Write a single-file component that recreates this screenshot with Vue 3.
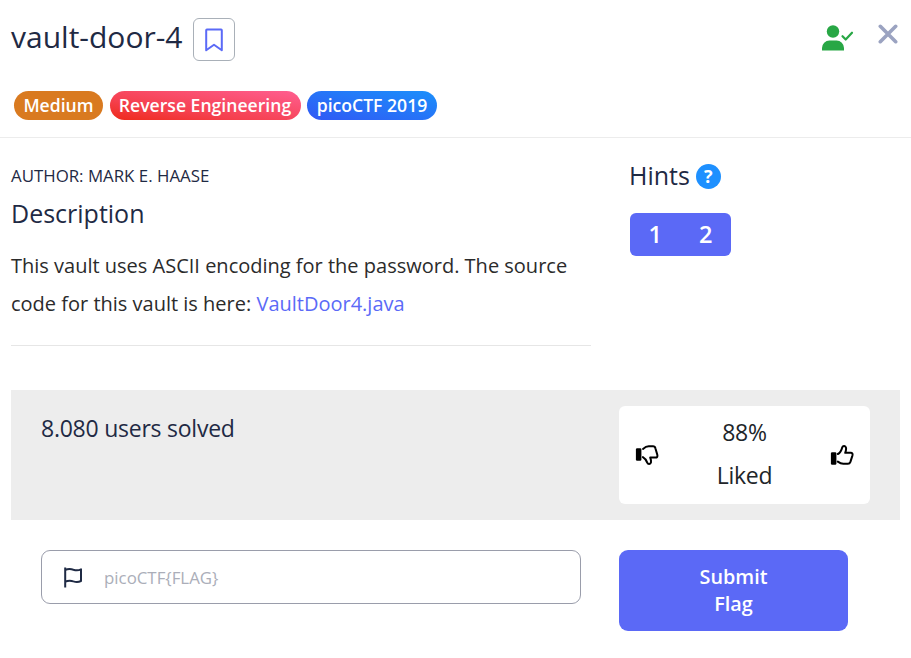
<script setup>
const tags = [
  { label: 'Medium', kind: 'medium' },
  { label: 'Reverse Engineering', kind: 'category' },
  { label: 'picoCTF 2019', kind: 'event' },
]
const hints = [1, 2]
</script>

<template>
  <main class="dialog">
    <header class="header">
      <div class="title-row">
        <h1 class="title">vault-door-4</h1>
        <button class="bookmark" aria-label="Bookmark">
          <svg width="18" height="24" viewBox="0 0 18 24" fill="none" stroke="#5b6af7" stroke-width="2" stroke-linejoin="round">
            <path d="M1.200 2.200q0-.7.7-.7h14.200q.7 0 .7.700V22.300L9 16.800l-7.800 5.500z" />
          </svg>
        </button>
        <div class="header-actions">
          <svg class="solved" width="32" height="26" viewBox="0 0 32 26">
            <circle cx="11" cy="6.500" r="6.200" fill="#28a745" />
            <path d="M0 25.500v-2.500a7.500 7.500 0 0 1 7.500-7.500h7a7.500 7.500 0 0 1 7.500 7.500v2.500z" fill="#28a745" />
            <path d="M20.500 11.200l3.200 3.300 6.300-6.800" fill="none" stroke="#28a745" stroke-width="2.200" stroke-linecap="round" stroke-linejoin="round" />
          </svg>
          <svg class="close" width="20" height="20" viewBox="0 0 20 20" fill="none" stroke="#9ba3c1" stroke-width="3.600" stroke-linecap="round">
            <path d="M2.300 2.300l15.400 15.400M17.700 2.300L2.300 17.700" />
          </svg>
        </div>
      </div>
      <div class="tags">
        <span v-for="t in tags" :key="t.label" class="tag" :class="t.kind">{{ t.label }}</span>
      </div>
    </header>

    <section class="body">
      <div class="details">
        <p class="author">AUTHOR: MARK E. HAASE</p>
        <h2 class="subhead">Description</h2>
        <p class="description">
          This vault uses ASCII encoding for the password. The source<br />code for this vault is here:
          <a class="link">VaultDoor4.java</a>
        </p>
      </div>
      <aside class="hints">
        <div class="hints-head">
          <h2 class="hints-title">Hints</h2>
          <span class="help">?</span>
        </div>
        <div class="hint-group">
          <button v-for="h in hints" :key="h" class="hint">{{ h }}</button>
        </div>
      </aside>
    </section>

    <section class="stats">
      <p class="solved-count">8.080 users solved</p>
      <div class="rating">
        <svg class="thumb" width="24" height="21" viewBox="0 0 24 21">
          <rect x="0.900" y="3.200" width="5.500" height="12.600" rx="1.200" fill="#000" />
          <path d="M8 3.900C9.900 2.200 11.400 1.300 13.700 1.300h4.300c1.300 0 2.100.6 2.400 1.900l1.900 6.600c.5 1.800-.2 2.800-1.800 2.800h-5.300c.7 1.700 1.100 3.200.8 4.700-.5 2.300-3 2.300-3.800.4-.9-2.500-2.400-4.600-4.300-5.600" fill="none" stroke="#000" stroke-width="2" stroke-linecap="round" stroke-linejoin="round" />
        </svg>
        <div class="score">
          <span>88%</span>
          <span>Liked</span>
        </div>
        <svg class="thumb" width="24" height="21" viewBox="0 0 24 21">
          <rect x="0.900" y="7.200" width="5.500" height="12.600" rx="1.200" fill="#000" />
          <path d="M7.900 9c2.100-1 3.400-3.100 4.300-6.600.8-1.900 3.300-1.700 3.800.4.300 1.500-.1 3.200-.8 5h5.500c1.600 0 2.200 1 1.700 2.800l-2 6.300c-.5 1.400-1.200 1.900-2.500 1.900h-4.600c-2.300 0-3.600-.8-5.500-2.200" fill="none" stroke="#000" stroke-width="2" stroke-linecap="round" stroke-linejoin="round" />
        </svg>
      </div>
    </section>

    <form class="submit" @submit.prevent>
      <label class="field">
        <svg class="flag" width="19" height="21" viewBox="0 0 19 21" fill="none" stroke="#1f2a44" stroke-width="2" stroke-linejoin="round">
          <path d="M1.200 .5v20M1.200 3c3.200-1.500 5.600-1.200 8.200-.3 2.800.9 5 .9 7.600-.4v11.700c-2.600 1.300-4.800 1.300-7.600.4-2.600-.9-5-1-8.200.3" />
        </svg>
        <input class="input" placeholder="picoCTF{FLAG}" />
      </label>
      <button class="submit-button">Submit<br />Flag</button>
    </form>
  </main>
</template>

<style>
body {
  background: #fff;
}
</style>

<style scoped>
.dialog {
  box-sizing: border-box;
  width: 911px;
  height: 658px;
  overflow: hidden;
  font-family: 'Open Sans', sans-serif;
  color: #1f2a44;
}
.dialog * {
  box-sizing: border-box;
}
h1, h2, p {
  margin: 0;
  font-weight: 400;
}
button {
  font-family: inherit;
  border: 0;
  padding: 0;
}
.header {
  height: 138px;
  padding: 18px 12px 0 11px;
  border-bottom: 1px solid #ececec;
}
.title-row {
  display: flex;
  height: 44px;
  align-items: flex-start;
}
.title {
  width: 182px;
  font-size: 30px;
  line-height: 38px;
  white-space: nowrap;
}
.bookmark {
  display: flex;
  align-items: center;
  justify-content: center;
  width: 42px;
  height: 43px;
  background: #fff;
  border: 1px solid #a9b0b8;
  border-radius: 6px;
}
.header-actions {
  display: flex;
  align-items: flex-start;
  gap: 24px;
  margin-left: auto;
  padding-top: 7px;
}
.close {
  margin: -1px 1px 0 0;
}
.tags {
  display: flex;
  gap: 6.500px;
  padding: 29px 0 0 3px;
}
.tag {
  height: 29px;
  border-radius: 15px;
  color: #fff;
  font-size: 17.600px;
  font-weight: 600;
  line-height: 28px;
  text-align: center;
  white-space: nowrap;
}
.medium {
  width: 89px;
  background: #d97a20;
}
.category {
  width: 191px;
  background: linear-gradient(to top right, #ee2a1a, #f5404e 35%, #ff5f91);
}
.event {
  width: 130px;
  background: linear-gradient(to top right, #3158f4, #1b90fb);
}
.body {
  display: flex;
  height: 252px;
  padding: 23px 11px 0;
}
.details {
  width: 580px;
  height: 185px;
  border-bottom: 1px solid #e6e6e6;
}
.author {
  font-size: 16.850px;
  line-height: 30px;
}
.subhead {
  margin-top: 3px;
  font-size: 25px;
  line-height: 38px;
}
.description {
  margin-top: 15px;
  color: #2b2b2b;
  font-size: 20px;
  line-height: 38px;
  white-space: nowrap;
}
.link {
  color: #5b6af7;
}
.hints {
  padding-left: 38px;
}
.hints-head {
  display: flex;
  align-items: center;
  gap: 6px;
  height: 30px;
}
.hints-title {
  padding-bottom: 2px;
  font-size: 25px;
  line-height: 30px;
}
.help {
  width: 25px;
  height: 25px;
  border-radius: 50%;
  background: #1e90ff;
  color: #fff;
  font-size: 18px;
  font-weight: 700;
  line-height: 24px;
  text-align: center;
}
.hint-group {
  display: flex;
  width: 101px;
  height: 43px;
  margin: 22px 0 0 1px;
  background: #5b69f6;
  border-radius: 6px;
}
.hint {
  flex: 1;
  padding-bottom: 2px;
  background: transparent;
  color: #fff;
  font-size: 23.500px;
  font-weight: 600;
}
.stats {
  display: flex;
  justify-content: space-between;
  height: 130px;
  margin: 0 11px;
  padding: 16px 30px;
  background: #ededed;
}
.solved-count {
  font-size: 23px;
  letter-spacing: -0.240px;
  line-height: 44px;
}
.rating {
  display: flex;
  align-items: center;
  justify-content: space-between;
  width: 251px;
  height: 98px;
  padding: 0 16px;
  background: #fff;
  border-radius: 6px;
}
.score {
  display: flex;
  flex-direction: column;
  align-items: center;
  color: #212529;
  font-size: 23px;
  letter-spacing: -0.240px;
  line-height: 43px;
  height: 88px;
}
.submit {
  display: flex;
  gap: 38px;
  padding: 30px 0 0 41px;
}
.field {
  display: flex;
  align-items: center;
  width: 540px;
  height: 54px;
  padding-left: 22px;
  border: 1px solid #9a9dab;
  border-radius: 9px;
}
.input {
  width: 400px;
  margin-left: 21px;
  padding: 0;
  border: 0;
  outline: 0;
  background: transparent;
  font: 16.850px 'Open Sans', sans-serif;
}
.input::placeholder {
  color: #abaeb9;
}
.submit-button {
  width: 229px;
  height: 81px;
  padding-bottom: 2px;
  border-radius: 9px;
  background: #5b69f6;
  color: #fff;
  font-size: 19.800px;
  font-weight: 600;
  line-height: 27px;
}
</style>
